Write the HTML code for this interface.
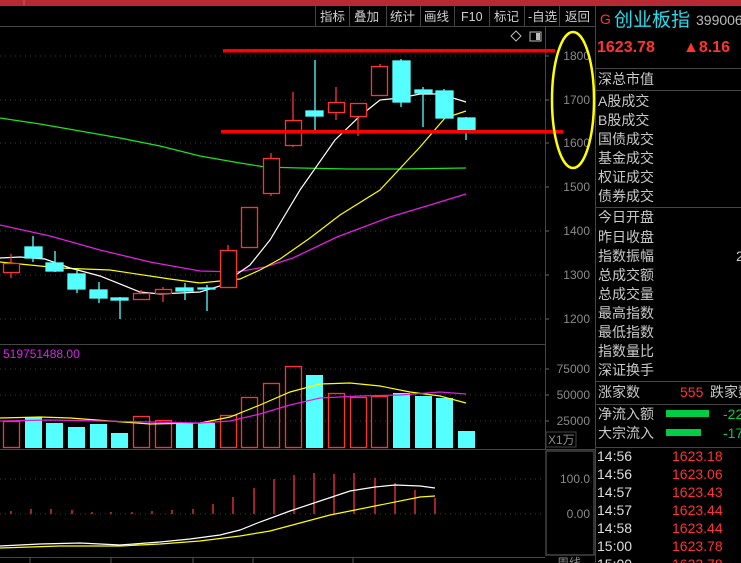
<!DOCTYPE html>
<html><head><meta charset="utf-8"><style>
html,body{margin:0;padding:0;background:#000;width:741px;height:563px;overflow:hidden}
svg{display:block}
text{font-family:"Liberation Sans","Noto Sans CJK SC",sans-serif}
</style></head><body>
<svg width="741" height="563" viewBox="0 0 741 563" xmlns="http://www.w3.org/2000/svg">
<rect width="741" height="563" fill="#000"/>
<rect x="0" y="0" width="741" height="6" fill="#b82a33"/>
<line x1="24" y1="0" x2="24" y2="6" stroke="#d05560"/>
<line x1="0" y1="26.5" x2="595" y2="26.5" stroke="#444"/>
<g stroke="#444"><line x1="315.5" y1="6" x2="315.5" y2="26"/><line x1="349.5" y1="6" x2="349.5" y2="26"/><line x1="386.5" y1="6" x2="386.5" y2="26"/><line x1="420.5" y1="6" x2="420.5" y2="26"/><line x1="454.5" y1="6" x2="454.5" y2="26"/><line x1="489.5" y1="6" x2="489.5" y2="26"/><line x1="524.5" y1="6" x2="524.5" y2="26"/><line x1="559.5" y1="6" x2="559.5" y2="26"/><line x1="595.5" y1="6" x2="595.5" y2="563"/></g>
<g fill="#d0d0d0" font-size="12.5"><text x="320" y="21">指标</text><text x="354" y="21">叠加</text><text x="390" y="21">统计</text><text x="424" y="21">画线</text><text x="461" y="21">F10</text><text x="494" y="21">标记</text><text x="528" y="21">-自选</text><text x="565" y="21">返回</text></g>
<path d="M516 31 L521 36 L516 41 L511 36 Z" fill="none" stroke="#bbb"/>
<rect x="530" y="32" width="11" height="9" fill="none" stroke="#bbb"/><rect x="536" y="33" width="4" height="7" fill="#bbb"/>
<line x1="545.5" y1="27" x2="545.5" y2="450" stroke="#444"/>
<line x1="0" y1="344.5" x2="545" y2="344.5" stroke="#444"/>
<line x1="0" y1="449.5" x2="595" y2="449.5" stroke="#444"/>
<line x1="0" y1="557.5" x2="545" y2="557.5" stroke="#444"/>
<g stroke="#3a3a3a" stroke-dasharray="1,4"><line x1="0" y1="56" x2="545" y2="56"/><line x1="0" y1="100" x2="545" y2="100"/><line x1="0" y1="143" x2="545" y2="143"/><line x1="0" y1="187" x2="545" y2="187"/><line x1="0" y1="231" x2="545" y2="231"/><line x1="0" y1="275" x2="545" y2="275"/><line x1="0" y1="319" x2="545" y2="319"/><line x1="0" y1="369" x2="545" y2="369"/><line x1="0" y1="395" x2="545" y2="395"/><line x1="0" y1="421" x2="545" y2="421"/><line x1="0" y1="479" x2="545" y2="479"/><line x1="0" y1="514" x2="545" y2="514"/></g>
<g fill="#8a8a8a" font-size="12" text-anchor="end"><text x="590" y="60">1800</text><text x="590" y="104">1700</text><text x="590" y="147">1600</text><text x="590" y="191">1500</text><text x="590" y="235">1400</text><text x="590" y="279">1300</text><text x="590" y="323">1200</text><text x="590" y="373">75000</text><text x="590" y="399">50000</text><text x="590" y="425">25000</text><text x="590" y="483">100.0</text><text x="590" y="518">0.00</text></g>
<g stroke="#666"><line x1="545" y1="56" x2="549" y2="56"/><line x1="545" y1="100" x2="549" y2="100"/><line x1="545" y1="143" x2="549" y2="143"/><line x1="545" y1="187" x2="549" y2="187"/><line x1="545" y1="231" x2="549" y2="231"/><line x1="545" y1="275" x2="549" y2="275"/><line x1="545" y1="319" x2="549" y2="319"/><line x1="545" y1="369" x2="549" y2="369"/><line x1="545" y1="395" x2="549" y2="395"/><line x1="545" y1="421" x2="549" y2="421"/></g>
<rect x="546" y="432" width="30" height="15" fill="none" stroke="#444"/>
<text x="548" y="444" fill="#8a8a8a" font-size="12">X1万</text>
<rect x="546" y="451" width="48" height="104" fill="none" stroke="#444" stroke-width="1.5"/>
<text x="557" y="567" fill="#8a8a8a" font-size="12">周线</text>
<polyline fill="none" stroke="#1fe01f" stroke-width="1.3" points="0,118 40,124 80,131 120,138 160,146 200,156 240,163 265,167 300,168 348,169 400,169 466,168"/>
<polyline fill="none" stroke="#e020e0" stroke-width="1.3" points="0,225 50,236 100,250 150,262 200,271 236,272 265,267 293,258 337,237 390,217 430,205 466,194"/>
<polyline fill="none" stroke="#ffff00" stroke-width="1.2" points="0,262 60,268 110,270 170,279 200,283 240,279 260,270 280,259 310,238 340,215 380,190 420,147 445,118 466,111"/>
<polyline fill="none" stroke="#fff" stroke-width="1.2" points="0,258 20,257 45,259 70,268 100,276 140,292 160,294 200,292 220,286 250,265 270,240 300,190 335,140 360,116 380,100 400,98 420,94 440,94 466,102"/>
<g stroke-width="1.3">
<g stroke="#ff3333" fill="none">
<line x1="11" y1="254" x2="11" y2="278"/><rect x="3.5" y="263.5" width="16" height="9" fill="#000"/>
<line x1="141" y1="290" x2="141" y2="300"/><rect x="133.5" y="293.5" width="16" height="6" fill="#000"/>
<line x1="163" y1="287" x2="163" y2="302"/><rect x="155.5" y="289.5" width="16" height="4" fill="#000"/>
<line x1="228" y1="245" x2="228" y2="250"/><rect x="220.5" y="250.5" width="16" height="37" fill="#000"/>
<rect x="241.5" y="207.5" width="16" height="40" fill="#000"/>
<line x1="271" y1="153" x2="271" y2="196"/><rect x="263.5" y="158.5" width="16" height="35" fill="#000"/>
<line x1="293" y1="92" x2="293" y2="147"/><rect x="285.5" y="120.5" width="16" height="25" fill="#000"/>
<line x1="336" y1="87" x2="336" y2="120"/><rect x="328.5" y="102.5" width="16" height="10" fill="#000"/>
<line x1="358" y1="103" x2="358" y2="136"/><rect x="350.5" y="103.5" width="16" height="13" fill="#000"/>
<line x1="380" y1="64" x2="380" y2="66"/><rect x="371.5" y="66.5" width="16" height="29" fill="#000"/>
</g>
<g stroke="#55ffff" fill="#55ffff">
<line x1="33" y1="236" x2="33" y2="262"/><rect x="25" y="247" width="17" height="11"/>
<line x1="55" y1="251" x2="55" y2="272"/><rect x="46" y="263" width="17" height="8"/>
<line x1="77" y1="270" x2="77" y2="293"/><rect x="68" y="274" width="17" height="15"/>
<line x1="99" y1="282" x2="99" y2="303"/><rect x="90" y="290" width="17" height="8"/>
<line x1="120" y1="297" x2="120" y2="319"/><rect x="111" y="298" width="17" height="2"/>
<line x1="185" y1="283" x2="185" y2="300"/><rect x="176" y="288" width="17" height="3"/>
<line x1="207" y1="285" x2="207" y2="311"/><rect x="198" y="288" width="17" height="1"/>
<line x1="315" y1="60" x2="315" y2="131"/><rect x="306" y="111" width="17" height="5"/>
<line x1="401" y1="59" x2="401" y2="107"/><rect x="393" y="61" width="17" height="41"/>
<line x1="423" y1="87" x2="423" y2="127"/><rect x="415" y="90" width="17" height="3"/>
<line x1="444" y1="89" x2="444" y2="118"/><rect x="436" y="91" width="17" height="27"/>
<line x1="466" y1="117" x2="466" y2="140"/><rect x="458" y="118" width="17" height="13"/>
</g></g>
<rect x="223" y="49" width="332" height="3.5" fill="#ff0000"/>
<rect x="221" y="130" width="342" height="3.5" fill="#ff0000"/>
<ellipse cx="573" cy="100" rx="21" ry="68" fill="none" stroke="#ffff00" stroke-width="2.5"/>
<text x="3" y="358" fill="#dd22ee" font-size="12">519751488.00</text>
<g stroke="#ff3333" fill="none" stroke-width="1.3">
<rect x="3.5" y="421.5" width="16" height="26"/><rect x="133.5" y="416.5" width="16" height="31"/><rect x="155.5" y="420.5" width="16" height="27"/><rect x="220.5" y="415.5" width="16" height="32"/><rect x="241.5" y="397.5" width="16" height="50"/><rect x="263.5" y="383.5" width="16" height="64"/><rect x="285.5" y="366.5" width="16" height="81"/><rect x="328.5" y="393.5" width="16" height="54"/><rect x="350.5" y="397.5" width="16" height="50"/><rect x="371.5" y="396.5" width="16" height="51"/></g>
<g fill="#55ffff"><rect x="25" y="417" width="17" height="31"/><rect x="46" y="423" width="17" height="25"/><rect x="68" y="427" width="17" height="21"/><rect x="90" y="424" width="17" height="24"/><rect x="111" y="433" width="17" height="15"/><rect x="176" y="423" width="17" height="25"/><rect x="198" y="423" width="17" height="25"/><rect x="306" y="375" width="17" height="73"/><rect x="393" y="393" width="17" height="55"/><rect x="415" y="396" width="17" height="52"/><rect x="436" y="398" width="17" height="50"/><rect x="458" y="431" width="17" height="17"/></g>
<polyline fill="none" stroke="#ffff00" stroke-width="1.2" points="0,418 40,417 70,418 110,421 150,424 200,423 230,417 260,405 290,392 320,384 350,383 380,386 410,392 440,396 466,403"/>
<polyline fill="none" stroke="#e020e0" stroke-width="1.2" points="0,421 50,420 100,421 150,422 200,423 230,421 260,414 290,405 320,398 360,396 400,395 440,392 466,394"/>
<g stroke="#ff3333" stroke-width="1.3"><line x1="11" y1="514" x2="11" y2="511"/><line x1="31" y1="514" x2="31" y2="509"/><line x1="51" y1="514" x2="51" y2="509"/><line x1="72" y1="514" x2="72" y2="510"/><line x1="92" y1="514" x2="92" y2="512"/><line x1="111" y1="514" x2="111" y2="512"/><line x1="132" y1="514" x2="132" y2="512"/><line x1="152" y1="514" x2="152" y2="511"/><line x1="172" y1="514" x2="172" y2="510"/><line x1="193" y1="514" x2="193" y2="509"/><line x1="213" y1="514" x2="213" y2="504"/><line x1="233" y1="514" x2="233" y2="497"/><line x1="254" y1="514" x2="254" y2="488"/><line x1="274" y1="514" x2="274" y2="479"/><line x1="294" y1="514" x2="294" y2="475"/><line x1="314" y1="514" x2="314" y2="473"/><line x1="334" y1="514" x2="334" y2="474"/><line x1="354" y1="514" x2="354" y2="473"/><line x1="375" y1="514" x2="375" y2="478"/><line x1="395" y1="514" x2="395" y2="483"/><line x1="415" y1="514" x2="415" y2="490"/><line x1="435" y1="514" x2="435" y2="498"/></g>
<polyline fill="none" stroke="#fff" stroke-width="1.2" points="0,546 40,544 80,543 120,545 160,542 190,539 220,535 240,530 260,522 290,511 320,501 350,491 375,487 395,485 420,486 435,488"/>
<polyline fill="none" stroke="#ffff00" stroke-width="1.2" points="0,548 60,546 120,546 160,544 200,541 240,536 270,531 300,523 330,515 355,510 380,505 420,497 435,496"/>
<g stroke="#555"><line x1="30" y1="557" x2="30" y2="563"/><line x1="111" y1="557" x2="111" y2="563"/><line x1="193" y1="557" x2="193" y2="563"/><line x1="253" y1="557" x2="253" y2="563"/><line x1="353" y1="557" x2="353" y2="563"/></g>
<text x="600" y="24" fill="#ff3333" font-size="14">G</text>
<text x="614" y="26" fill="#22ddee" font-size="19">创业板指</text>
<text x="696" y="25" fill="#bbb" font-size="14">399006</text>
<text x="597" y="52" fill="#ff3333" font-size="16" font-weight="bold">1623.78</text>
<text x="683" y="52" fill="#ff3333" font-size="16" font-weight="bold">▲8.16</text>
<g stroke="#444"><line x1="596" y1="68.5" x2="741" y2="68.5"/><line x1="596" y1="90.5" x2="741" y2="90.5"/><line x1="596" y1="207.5" x2="741" y2="207.5"/><line x1="596" y1="381.5" x2="741" y2="381.5"/><line x1="596" y1="404.5" x2="741" y2="404.5"/><line x1="596" y1="447.5" x2="741" y2="447.5"/></g>
<g fill="#c8c8c8" font-size="14"><text x="598" y="84">深总市值</text><text x="598" y="106">A股成交</text><text x="598" y="125">B股成交</text><text x="598" y="144">国债成交</text><text x="598" y="163">基金成交</text><text x="598" y="182">权证成交</text><text x="598" y="201">债券成交</text>
<text x="598" y="222">今日开盘</text><text x="598" y="242">昨日收盘</text><text x="598" y="261">指数振幅</text><text x="598" y="280">总成交额</text><text x="598" y="299">总成交量</text><text x="598" y="318">最高指数</text><text x="598" y="337">最低指数</text><text x="598" y="356">指数量比</text><text x="598" y="375">深证换手</text>
<text x="736" y="261">2</text>
<text x="598" y="397">涨家数</text><text x="710" y="397">跌家数</text><text x="598" y="419">净流入额</text><text x="598" y="438">大宗流入</text></g>
<text x="680" y="397" fill="#ff3333" font-size="14">555</text>
<rect x="666" y="410" width="43" height="7" fill="#00cc44"/>
<rect x="666" y="429" width="35" height="7" fill="#00cc44"/>
<text x="723" y="419" fill="#00cc44" font-size="14">-22</text>
<text x="723" y="438" fill="#00cc44" font-size="14">-17</text>
<g font-size="14"><g fill="#dddddd"><text x="597" y="461">14:56</text><text x="597" y="479">14:56</text><text x="597" y="497">14:57</text><text x="597" y="515">14:57</text><text x="597" y="533">14:58</text><text x="597" y="551">15:00</text><text x="597" y="569">15:00</text></g>
<g fill="#ff3333"><text x="672" y="461">1623.18</text><text x="672" y="479">1623.06</text><text x="672" y="497">1623.43</text><text x="672" y="515">1623.44</text><text x="672" y="533">1623.44</text><text x="672" y="551">1623.78</text><text x="672" y="569">1623.78</text></g></g>
</svg>
</body></html>
